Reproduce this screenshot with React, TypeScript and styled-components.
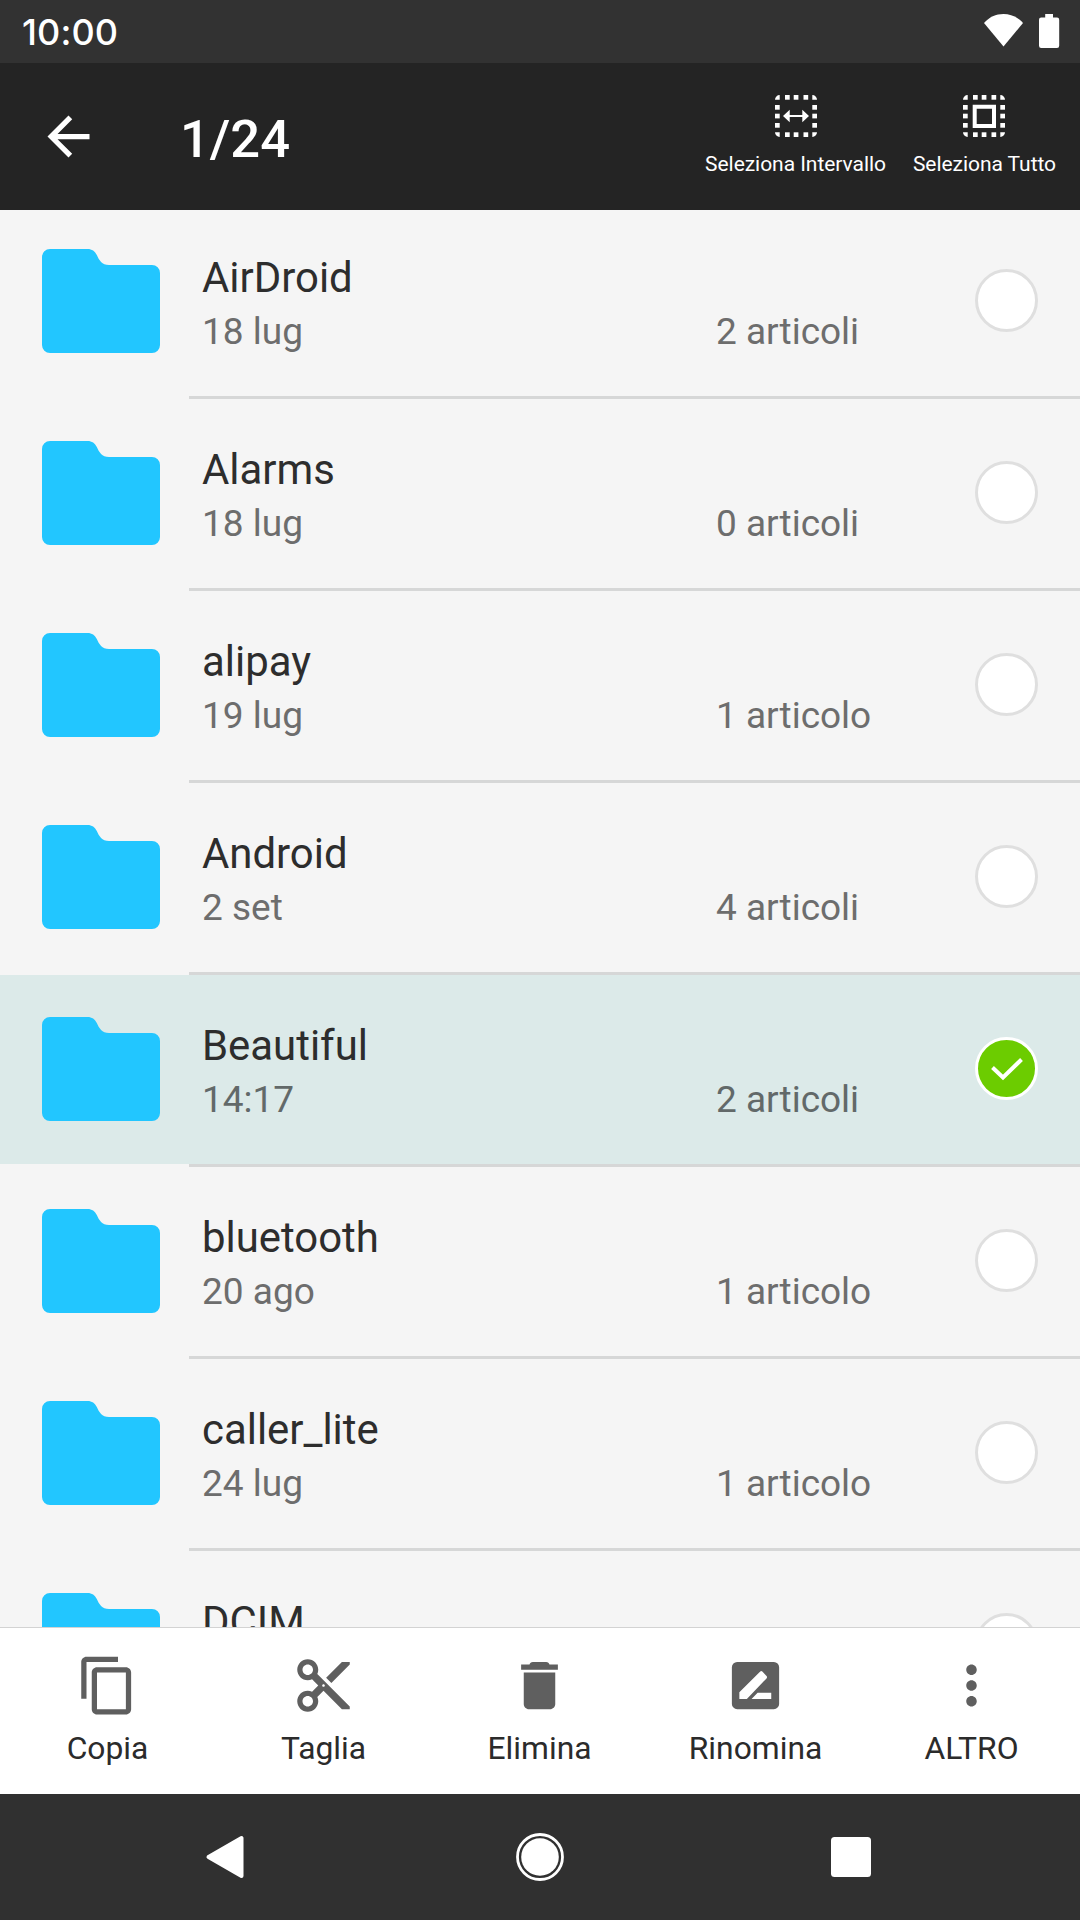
import React from "react";
import styled, { createGlobalStyle } from "styled-components";

const GlobalStyle = createGlobalStyle`
  *, *::before, *::after { box-sizing: border-box; }
  body { margin: 0; background: #f5f5f5; }
  svg { display: block; flex: none; }
`;

const Screen = styled.div`
  display: flex;
  flex-direction: column;
  width: 1080px;
  height: 1920px;
  overflow: hidden;
  background: #f5f5f5;
  font-family: Roboto, "Noto Sans", sans-serif;
`;

const StatusBar = styled.div`
  display: flex;
  justify-content: space-between;
  flex: none;
  height: 63px;
  padding: 0 20px 0 22px;
  background: #323232;
`;

const Clock = styled.span`
  font-family: Inter, Roboto, sans-serif;
  font-size: 36px;
  font-weight: 550;
  line-height: 65px;
  letter-spacing: 0.1px;
  color: #fff;
`;

const StatusIcons = styled.div`
  display: flex;
  gap: 16px;
  padding-top: 14px;
`;

const AppBar = styled.header`
  display: flex;
  align-items: center;
  flex: none;
  height: 147px;
  padding: 0 24px 0 37px;
  background: #242424;
  color: #fff;
`;

const Title = styled.h1`
  flex: 1;
  margin: 4px 0 0 80px;
  font-size: 52.5px;
  font-weight: 500;
  line-height: 62px;
`;

const BarActions = styled.div`
  display: flex;
  align-self: stretch;
  gap: 27px;
  padding-top: 32px;
`;

const BarAction = styled.button`
  display: flex;
  flex-direction: column;
  align-items: center;
  gap: 15px;
  padding: 0;
  border: 0;
  background: none;
  color: #fff;
  font: 400 21px/25px Roboto, sans-serif;
  letter-spacing: -0.05px;
  white-space: nowrap;
`;

const List = styled.main`
  flex: 1;
  min-height: 0;
  overflow: hidden;
`;

const Rows = styled.div`
  margin-top: -3px;
`;

const Row = styled.div<{ $selected: boolean }>`
  display: flex;
  height: 192px;
  padding: 0 42px;
  background: linear-gradient(${(p) => (p.$selected ? "#dceae9" : "#f5f5f5")} 189px, #f5f5f5 189px);
`;

const FolderWrap = styled.div`
  width: 147px;
  padding-top: 42px;
`;

const Info = styled.div`
  display: grid;
  grid-template-columns: 514px 1fr 63px;
  flex: 1;
  margin-right: -42px;
  padding: 0 42px 0 13px;
  border-bottom: 3px solid #d6d7d7;
`;

const Labels = styled.div`
  padding-top: 46px;
`;

const Name = styled.div`
  font-size: 41.9px;
  line-height: 50px;
  color: #2d2d2d;
  white-space: nowrap;
`;

const Meta = styled.div<{ $selected: boolean }>`
  font-size: 37px;
  line-height: 44px;
  margin-top: 7px;
  color: ${(p) => (p.$selected ? "#626969" : "#6d6d6d")};
  white-space: nowrap;
`;

const Count = styled(Meta)`
  margin-top: 103px;
`;

const Check = styled.div<{ $selected: boolean }>`
  display: flex;
  align-items: center;
  justify-content: center;
  width: 63px;
  height: 63px;
  margin-top: 62px;
  border-radius: 50%;
  border: 3px solid ${(p) => (p.$selected ? "#fff" : "#dfdfdf")};
  background: ${(p) => (p.$selected ? "#6ccc00" : "#fff")};
`;

const Toolbar = styled.footer`
  display: grid;
  grid-template-columns: repeat(5, 1fr);
  flex: none;
  height: 167px;
  border-top: 1px solid #d3d3d3;
  background: #fff;
`;

const Tool = styled.button`
  display: flex;
  flex-direction: column;
  align-items: center;
  gap: 12px;
  padding: 26px 1px 0 0;
  border: 0;
  background: none;
  color: #2b2b2b;
  font: 400 31.8px/38px Roboto, sans-serif;
`;

const NavBar = styled.nav`
  display: grid;
  grid-template-columns: repeat(3, 311px);
  justify-content: center;
  place-items: center;
  flex: none;
  height: 126px;
  background: #303030;
`;

const EDGE_CELLS: [number, number][] = [
  [10, 0], [18.7, 0], [28.5, 0],
  [10, 37.3], [18.7, 37.3], [28.5, 37.3],
  [0, 10], [0, 18.7], [0, 28],
  [37.3, 10], [37.3, 18.7], [37.3, 28],
];

function Marquee({ children }: { children: React.ReactNode }) {
  return (
    <svg width="42" height="42" viewBox="0 0 42 42" fill="#fff">
      {EDGE_CELLS.map(([x, y]) => (
        <rect key={`${x}-${y}`} x={x} y={y} width="4.7" height="4.7" />
      ))}
      <path d="M0 4.7A4.7 4.7 0 0 1 4.7 0V4.7ZM42 4.7A4.7 4.7 0 0 0 37.3 0V4.7ZM0 37.3A4.7 4.7 0 0 0 4.7 42V37.3ZM42 37.3A4.7 4.7 0 0 1 37.3 42V37.3Z" />
      {children}
    </svg>
  );
}

function Folder() {
  return (
    <svg width="118" height="104" viewBox="0 0 118 104">
      <path
        fill="#22c6ff"
        d="M8 0H45.500C50 0 53 2.200 54.800 6C57 11 60 16 67 16H110a8 8 0 0 1 8 8V96a8 8 0 0 1-8 8H8a8 8 0 0 1-8-8V8a8 8 0 0 1 8-8Z"
      />
    </svg>
  );
}

const FOLDERS = [
  { name: "AirDroid", date: "18 lug", count: "2 articoli" },
  { name: "Alarms", date: "18 lug", count: "0 articoli" },
  { name: "alipay", date: "19 lug", count: "1 articolo" },
  { name: "Android", date: "2 set", count: "4 articoli" },
  { name: "Beautiful", date: "14:17", count: "2 articoli", selected: true },
  { name: "bluetooth", date: "20 ago", count: "1 articolo" },
  { name: "caller_lite", date: "24 lug", count: "1 articolo" },
  { name: "DCIM", date: "", count: "" },
];

const TOOLS = [
  {
    label: "Copia",
    path: "M16 1H4c-1.100 0-2 .9-2 2v14h2V3h12V1zm3 4H8c-1.100 0-2 .9-2 2v14c0 1.100.9 2 2 2h11c1.100 0 2-.9 2-2V7c0-1.100-.9-2-2-2zm0 16H8V7h11v14z",
  },
  {
    label: "Taglia",
    path: "M9.640 7.640c.23-.5.36-1.050.36-1.640 0-2.210-1.790-4-4-4S2 3.790 2 6s1.790 4 4 4c.59 0 1.140-.13 1.640-.36L10 12l-2.360 2.360C7.140 14.130 6.590 14 6 14c-2.210 0-4 1.790-4 4s1.790 4 4 4 4-1.790 4-4c0-.59-.13-1.140-.36-1.640L12 14l7 7h3v-1L9.640 7.640zM6 8c-1.100 0-2-.89-2-2s.9-2 2-2 2 .89 2 2-.9 2-2 2zm0 12c-1.100 0-2-.89-2-2s.9-2 2-2 2 .89 2 2-.9 2-2 2zm6-7.500c-.28 0-.5-.22-.5-.5s.22-.5.5-.5.5.22.5.5-.22.5-.5.5zM19 3l-6 6 2 2 7-7V3z",
  },
  {
    label: "Elimina",
    path: "M6 19c0 1.100.9 2 2 2h8c1.100 0 2-.9 2-2V7H6v12zM19 4h-3.200c-.2-.6-.5-1-1.300-1h-5c-.8 0-1.100.4-1.300 1H5v2h14V4z",
  },
  {
    label: "Rinomina",
    path: "M5 3h14a2 2 0 0 1 2 2v14a2 2 0 0 1-2 2H5a2 2 0 0 1-2-2V5a2 2 0 0 1 2-2ZM5.850 17.100H8.700L16.200 9.300Q16.600 8.800 16.200 8.400L14.600 6.700Q14.200 6.300 13.800 6.700L5.850 14.600ZM10.500 17.100H18V14.800H12.800Z",
  },
  {
    label: "ALTRO",
    path: "M12 8c1.100 0 2-.9 2-2s-.9-2-2-2-2 .9-2 2 .9 2 2 2zm0 2c-1.100 0-2 .9-2 2s.9 2 2 2 2-.9 2-2-.9-2-2-2zm0 6c-1.100 0-2 .9-2 2s.9 2 2 2 2-.9 2-2-.9-2-2-2z",
  },
];

export default function App() {
  return (
    <Screen>
      <GlobalStyle />
      <StatusBar>
        <Clock>10:00</Clock>
        <StatusIcons>
          <svg width="39" height="33" viewBox="0 0 39 33" fill="#fff">
            <path d="M19.500 32.500 0 9C5 3.200 12 0 19.500 0S34 3.200 39 9Z" />
          </svg>
          <svg width="21" height="34" viewBox="0 0 21 34" fill="#fff">
            <path d="M6.200 0H14V3.500H18a2.200 2.200 0 0 1 2.200 2.200V31.800a2.200 2.200 0 0 1-2.200 2.200H2.200A2.200 2.200 0 0 1 0 31.800V5.700a2.200 2.200 0 0 1 2.200-2.200h4Z" />
          </svg>
        </StatusIcons>
      </StatusBar>

      <AppBar>
        <svg width="63" height="63" viewBox="0 0 24 24" fill="#fff">
          <path d="M20 11H7.830l5.590-5.590L12 4l-8 8 8 8 1.410-1.410L7.830 13H20v-2z" />
        </svg>
        <Title>1/24</Title>
        <BarActions>
          <BarAction>
            <Marquee>
              <path d="M8 21 14.700 14.700V19.900H27.300V14.700L34 21 27.300 27.300V22.100H14.700V27.300Z" />
            </Marquee>
            Seleziona Intervallo
          </BarAction>
          <BarAction>
            <Marquee>
              <path fillRule="evenodd" d="M9.700 9.700H33V33H9.700ZM13.700 13.700V29H29V13.700Z" />
            </Marquee>
            Seleziona Tutto
          </BarAction>
        </BarActions>
      </AppBar>

      <List>
        <Rows>
          {FOLDERS.map(({ name, date, count, selected = false }) => (
            <Row key={name} $selected={selected}>
              <FolderWrap>
                <Folder />
              </FolderWrap>
              <Info>
                <Labels>
                  <Name>{name}</Name>
                  <Meta $selected={selected}>{date}</Meta>
                </Labels>
                <Count $selected={selected}>{count}</Count>
                <Check $selected={selected}>
                  {selected && (
                    <svg width="34" height="26" viewBox="0 0 34 26">
                      <path d="M2.500 11.500 13 21.500 31.500 3.500" fill="none" stroke="#fff" strokeWidth="4" />
                    </svg>
                  )}
                </Check>
              </Info>
            </Row>
          ))}
        </Rows>
      </List>

      <Toolbar>
        {TOOLS.map(({ label, path }) => (
          <Tool key={label}>
            <svg width="63" height="63" viewBox="0 0 24 24" fill="#5f5f5f" fillRule="evenodd">
              <path d={path} />
            </svg>
            {label}
          </Tool>
        ))}
      </Toolbar>

      <NavBar>
        <svg width="48" height="48" viewBox="0 0 48 48">
          <path d="M3.500 24 36.500 5V43Z" fill="#fff" stroke="#fff" strokeWidth="4" strokeLinejoin="round" />
        </svg>
        <svg width="48" height="48" viewBox="0 0 48 48">
          <circle cx="24" cy="24" r="22.500" fill="none" stroke="#fff" strokeWidth="2.800" />
          <circle cx="24" cy="24" r="18.800" fill="#fff" />
        </svg>
        <svg width="40" height="40" viewBox="0 0 40 40">
          <rect width="40" height="40" rx="3.500" fill="#fff" />
        </svg>
      </NavBar>
    </Screen>
  );
}
